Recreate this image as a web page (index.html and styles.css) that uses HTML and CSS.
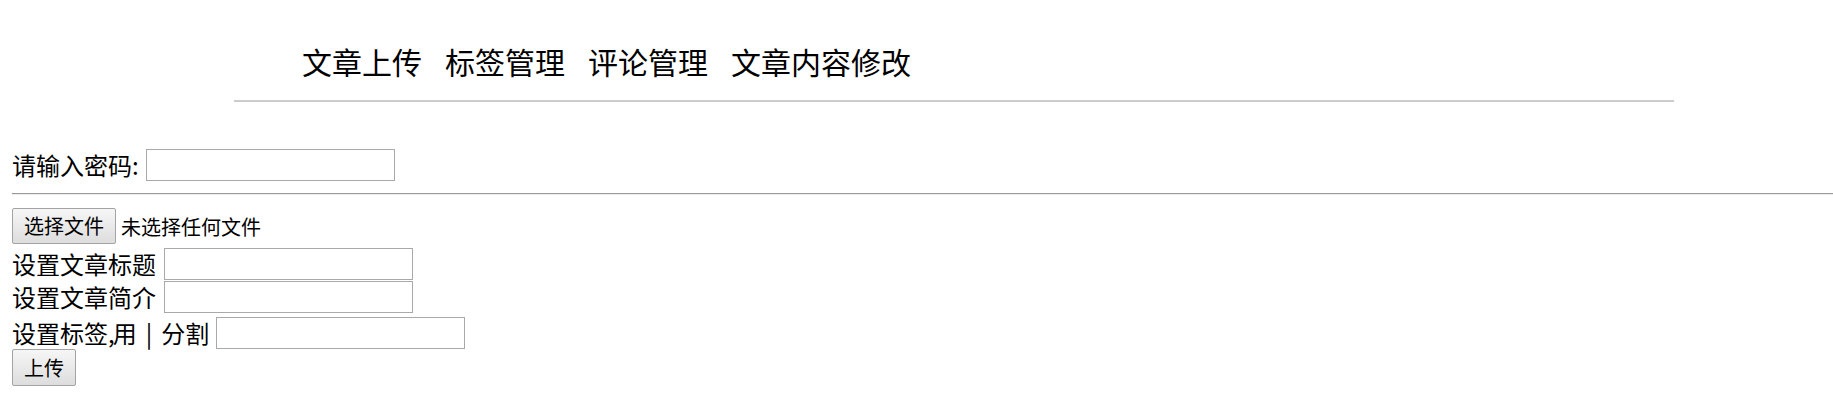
FILE: index.html
```html
<!DOCTYPE html>
<html lang="zh-CN">
<head>
<meta charset="utf-8">
<title>文章管理</title>
<link rel="stylesheet" href="styles.css">
</head>
<body>
<header class="nav">
  <ul class="nav-list">
    <li>文章上传</li>
    <li>标签管理</li>
    <li>评论管理</li>
    <li>文章内容修改</li>
  </ul>
  <div class="nav-line"></div>
</header>
<main class="content">
  <div class="row pass-row">
    <label class="label">请输入密码:</label>
    <input class="field" type="password">
  </div>
  <div class="divider"></div>
  <div class="row file-row">
    <button class="btn file-btn">选择文件</button>
    <span class="file-name">未选择任何文件</span>
  </div>
  <div class="row title-row">
    <label class="label">设置文章标题</label>
    <input class="field" type="text">
  </div>
  <div class="row intro-row">
    <label class="label">设置文章简介</label>
    <input class="field" type="text">
  </div>
  <div class="row tag-row">
    <label class="label">设置标签<span class="comma">,</span>用<span class="sep">|</span>分割</label>
    <input class="field" type="text">
  </div>
  <div class="row upload-row">
    <button class="btn upload-btn">上传</button>
  </div>
</main>
</body>
</html>
```

FILE: styles.css
```css
html, body {
  margin: 0;
  padding: 0;
  background: #fff;
}
body {
  font-family: "Noto Sans CJK SC", "Microsoft YaHei", sans-serif;
  font-size: 24px;
  color: #000;
  overflow-x: hidden;
}
.nav {
  margin-left: 234px;
  width: 1440px;
  padding-top: 44px;
}
.nav-list {
  list-style: none;
  margin: 0;
  padding: 0 0 0 68px;
  display: flex;
  gap: 23px;
  font-size: 30px;
  line-height: 34px;
  height: 34px;
}
.nav-list li {
  white-space: nowrap;
}
.nav-line {
  height: 2px;
  background: #cccccc;
  margin-top: 22px;
}
.content {
  padding-left: 12px;
}
.row {
  display: flex;
  align-items: center;
}
.label {
  white-space: nowrap;
  line-height: 32px;
}
.field {
  box-sizing: border-box;
  width: 249px;
  height: 32px;
  border: 1px solid #a9a9a9;
  margin: 0;
  padding: 0 3px;
  background: #fff;
  font-size: 20px;
}
.pass-row {
  margin-top: 47px;
  height: 32px;
  gap: 7px;
}
.divider {
  margin-top: 12px;
  height: 1px;
  border-top: 1px solid #9a9a9a;
  background: #ececec;
}
.btn {
  box-sizing: border-box;
  margin: 0;
  font-family: "Noto Sans CJK SC", "Microsoft YaHei", sans-serif;
  font-size: 20px;
  color: #000;
  background: linear-gradient(#f6f6f6, #dddddd);
  border: 1px solid #a3a3a3;
  border-radius: 2px;
  padding: 0;
  line-height: 1;
}
.file-row {
  margin-top: 13px;
  height: 36px;
  gap: 5px;
}
.file-btn {
  width: 104px;
  height: 36px;
}
.file-name {
  font-size: 20px;
}
.title-row {
  margin-top: 4px;
  height: 32px;
  gap: 8px;
}
.intro-row {
  margin-top: 1px;
  height: 32px;
  gap: 8px;
}
.tag-row {
  margin-top: 4px;
  height: 32px;
  gap: 7px;
}
.comma {
  letter-spacing: -2px;
}
.sep {
  margin: 0 9px;
}
.upload-row {
  height: 37px;
}
.upload-btn {
  width: 64px;
  height: 37px;
}
```
